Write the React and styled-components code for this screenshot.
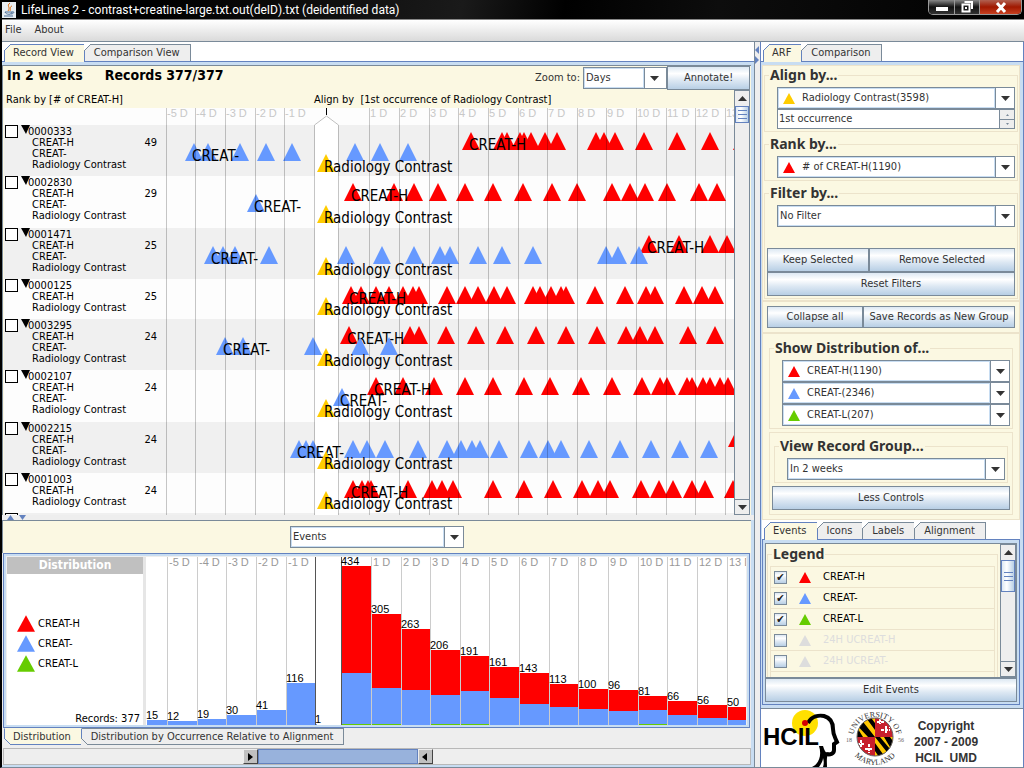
import { useState } from "react";
import styled, { createGlobalStyle, css } from "styled-components";

const colors = {
  cream: "#fbf8e2",
  creamEdge: "#ece3cb",
  steel: "#7a8a99",
  blueLine: "#6382bf",
  band: "#c8ddf2",
  panel: "#eeeeee",
  text: "#333333",
  red: "#ff0000",
  blue: "#6699ff",
  yellow: "#ffcc00",
  green: "#66cc00",
  muted: "#dddddd",
};

const uiFont = `"DejaVu Sans Condensed", "DejaVu Sans", sans-serif`;
const metal = `linear-gradient(#dde8f3, #ffffff 30%, #dde8f3 60%, #b8cfe5)`;

// pixel position of the left edge of the time axis and of the aligned event
const AXIS_LEFT = 166;
const ALIGN_X = 326;

const axisTicks = [
  [166, "-5 D"],
  [195, "-4 D"],
  [225, "-3 D"],
  [255, "-2 D"],
  [284, "-1 D"],
  [369, "1 D"],
  [399, "2 D"],
  [429, "3 D"],
  [458, "4 D"],
  [488, "5 D"],
  [518, "6 D"],
  [547, "7 D"],
  [577, "8 D"],
  [606, "9 D"],
  [636, "10 D"],
  [666, "11 D"],
  [695, "12 D"],
  [725, "13 D"],
];

const records = [
  {
    id: "0000333",
    count: 49,
    high: [471, 502, 507, 520, 524, 531, 545, 557, 596, 604, 615, 644, 677, 710, 742],
    normal: [194, 208, 240, 266, 292, 355, 380, 408],
  },
  {
    id: "0002830",
    count: 29,
    high: [353, 394, 414, 438, 465, 493, 523, 552, 577, 612, 630, 645, 667, 699, 717],
    normal: [256],
  },
  {
    id: "0001471",
    count: 25,
    high: [649, 679, 710, 727],
    normal: [213, 223, 235, 269, 346, 382, 414, 440, 450, 478, 502, 533, 606, 618, 639],
  },
  {
    id: "0000125",
    count: 25,
    high: [351, 361, 376, 389, 403, 413, 419, 447, 465, 478, 494, 507, 533, 540, 551, 561, 566, 595, 625, 646, 655, 684, 702, 715],
  },
  {
    id: "0003295",
    count: 24,
    high: [349, 410, 419, 446, 476, 505, 536, 566, 597, 626, 640, 655, 688, 715],
    normal: [225, 243, 313, 360, 389],
  },
  {
    id: "0002107",
    count: 24,
    high: [376, 403, 434, 465, 493, 524, 550, 581, 612, 642, 660, 667, 687, 692, 703, 710, 720, 728],
    normal: [342],
  },
  {
    id: "0002215",
    count: 24,
    high: [737],
    normal: [299, 306, 313, 353, 367, 385, 418, 447, 461, 472, 480, 499, 529, 548, 561, 589, 620, 651, 680, 709],
  },
  {
    id: "0001003",
    count: 24,
    high: [353, 362, 368, 371, 408, 432, 442, 453, 493, 524, 553, 582, 598, 610, 641, 659, 673, 692, 705, 733],
  },
];

// x, label, total height, height of the CREAT- part, height of the CREAT-L part
const bars = [
  [146, 15, 5, 5, 0],
  [167, 12, 4, 4, 0],
  [197, 19, 6, 6, 0],
  [226, 30, 10, 10, 0],
  [256, 41, 15, 15, 0],
  [286, 116, 42, 42, 0],
  [315, 1, 1, 1, 0],
  [341, 434, 159, 52, 1],
  [371, 305, 111, 37, 1],
  [401, 263, 96, 35, 0],
  [430, 206, 75, 30, 1],
  [460, 191, 69, 34, 1],
  [489, 161, 58, 27, 0],
  [519, 143, 52, 21, 0],
  [549, 113, 41, 18, 0],
  [578, 100, 36, 16, 0],
  [608, 96, 35, 14, 0],
  [638, 81, 29, 15, 1],
  [667, 66, 24, 10, 0],
  [697, 56, 20, 7, 0],
  [727, 50, 18, 5, 0],
  [757],
];
const distributionTicks = ["-5 D", "-4 D", "-3 D", "-2 D", "-1 D", "", "", "1 D", "2 D", "3 D", "4 D", "5 D", "6 D", "7 D", "8 D", "9 D", "10 D", "11 D", "12 D", "13 D"];

function Triangle({ color, size = 12 }) {
  return (
    <svg width={size} height={size - 1} viewBox='0 0 12 11' aria-hidden='true'>
      <path d='M6 0 L12 11 H0 Z' fill={color} />
    </svg>
  );
}

function Caret({ up = false, color = colors.text, width = 9 }) {
  return (
    <svg width={width} height='5' viewBox='0 0 9 5' preserveAspectRatio='none' aria-hidden='true'>
      <path d={up ? "M0 5 L4.5 0 L9 5 Z" : "M0 0 H9 L4.5 5 Z"} fill={color} />
    </svg>
  );
}

function Combo({ label, options, icon }) {
  return (
    <ComboBox>
      <ComboField $icon={icon}>
        {icon && <Triangle color={icon} />}
        <ComboSelect aria-label={label}>
          {options.map((option) => (
            <option key={option}>{option}</option>
          ))}
        </ComboSelect>
      </ComboField>
      <ComboArrow>
        <Caret />
      </ComboArrow>
    </ComboBox>
  );
}

function Tabs({ names, bottom = false }) {
  const [active, setActive] = useState(names[0]);

  return (
    <TabList role='tablist' $bottom={bottom}>
      {names.map((name) => (
        <Tab
          key={name}
          role='tab'
          aria-selected={name === active}
          $active={name === active}
          $bottom={bottom}
          onClick={() => setActive(name)}
        >
          {name}
        </Tab>
      ))}
    </TabList>
  );
}

function EventLane({ name, color, events, base }) {
  return (
    <g>
      {events.map((x, index) => (
        <path key={index} d={`M${x} ${base - 18} L${x + 9} ${base} H${x - 9} Z`} fill={color} />
      ))}
      {events[0] < 735 && (
        <EventLabel x={events[0] - 2} y={base}>
          {name}
        </EventLabel>
      )}
    </g>
  );
}

function Record({ record, shaded }) {
  const lanes = [{ name: "CREAT-H", color: colors.red, events: record.high }];
  if (record.normal) {
    lanes.push({ name: "CREAT-", color: colors.blue, events: record.normal });
  }
  lanes.push({ name: "Radiology Contrast", color: colors.yellow, events: [ALIGN_X] });

  return (
    <RecordRow $shaded={shaded} $tall={lanes.length > 2}>
      <RecordInfo>
        <RecordCheck type='checkbox' aria-label={`Select record ${record.id}`} />
        <RecordToggle aria-label={`Collapse record ${record.id}`}>
          <svg width='9' height='9' viewBox='0 0 9 9'>
            <path d='M0 0 H9 L5 9 Z' fill='#000' />
          </svg>
        </RecordToggle>
        <RecordText>
          {record.id}
          <LaneNames>
            {lanes.map(({ name }) => (
              <li key={name}>{name}</li>
            ))}
          </LaneNames>
        </RecordText>
        <RecordCount>{record.count}</RecordCount>
      </RecordInfo>
      <Timeline>
        <g transform={`translate(${-AXIS_LEFT} 0)`}>
          <rect x='315' y='0' width='23' height='60' fill='#fff' />
          {lanes.map((lane, index) => (
            <EventLane key={lane.name} {...lane} base={25 + index * 11} />
          ))}
          <GridLines />
        </g>
      </Timeline>
    </RecordRow>
  );
}

function GridLines() {
  return [...axisTicks.map(([x]) => x), 314, 338].map((x) => (
    <rect key={x} x={x} y='0' width='1' height='60' fill='rgba(0, 0, 0, 0.22)' />
  ));
}

function Axis() {
  return (
    <AxisRow>
      <Timeline>
        <g transform={`translate(${-AXIS_LEFT} 0)`}>
          {axisTicks.map(([x, name]) => (
            <g key={name}>
              <rect x={x} y='0' width='1' height='17' fill='#c8c8c8' />
              <TickLabel x={x + 1} y='9' fill='#c8c8c8'>
                {name}
              </TickLabel>
            </g>
          ))}
          <path d='M314.5 17 L326.5 8 L338.5 17' fill='#fff' stroke='#c0c0c0' />
          <rect x={ALIGN_X} y='0' width='1' height='7' fill='#000' />
        </g>
      </Timeline>
    </AxisRow>
  );
}

function DistributionChart() {
  return (
    <ChartArea>
      <g transform='translate(-146 0)'>
        {bars.slice(1, -1).map(([x], index) => (
          <g key={x}>
            <rect
              x={x}
              y='0'
              width='1'
              height='168'
              fill={x === 315 || x === 341 ? "#555" : "#ccc"}
            />
            <TickLabel x={x + 2} y='9' fill='#999'>
              {distributionTicks[index]}
            </TickLabel>
          </g>
        ))}
        {bars.slice(0, -1).map(([x, value, total, normal, low], index) => {
          const width = value === 1 ? 1 : bars[index + 1][0] - x - 1;
          return (
            <g key={x}>
              <rect x={x + 1} y={168 - total} width={width} height={total} fill={colors.red} />
              <rect x={x + 1} y={168 - normal} width={width} height={normal} fill={colors.blue} />
              <rect x={x + 1} y={168 - low} width={width} height={low} fill={colors.green} />
              <TickLabel x={x} y={167 - total} fill='#000'>
                {value}
              </TickLabel>
            </g>
          );
        })}
      </g>
    </ChartArea>
  );
}

function ScrollBar({ thumb }) {
  return (
    <ScrollTrack>
      <ScrollButton aria-label='Scroll up'>
        <Caret up />
      </ScrollButton>
      <ScrollThumb $size={thumb} />
      <ScrollButton aria-label='Scroll down' $end>
        <Caret />
      </ScrollButton>
    </ScrollTrack>
  );
}

function RecordView() {
  return (
    <LeftColumn>
      <Tabs names={["Record View", "Comparison View"]} />
      <RecordPane>
        <PaneHeader>
          <PaneTitle>In 2 weeks</PaneTitle>
          <PaneTitle>Records 377/377</PaneTitle>
          <ZoomControls>
            <span>Zoom to:</span>
            <ZoomCombo>
              <Combo label='Zoom to' options={["Days", "Weeks", "Months"]} />
            </ZoomCombo>
            <AnnotateButton>Annotate!</AnnotateButton>
          </ZoomControls>
        </PaneHeader>
        <RecordScroll>
          <RecordList>
            <OrderRow>
              <span>Rank by [# of CREAT-H]</span>
              <span>Align by &nbsp;[1st occurrence of Radiology Contrast]</span>
            </OrderRow>
            <Axis />
            {records.map((record, index) => (
              <Record key={record.id} record={record} shaded={index % 2 === 0} />
            ))}
            <RecordRow $shaded $tall>
              <RecordInfo>
                <RecordCheck type='checkbox' aria-label='Select next record' />
              </RecordInfo>
              <Timeline>
                <g transform={`translate(${-AXIS_LEFT} 0)`}>
                  <rect x='315' y='0' width='23' height='60' fill='#fff' />
                  <GridLines />
                </g>
              </Timeline>
            </RecordRow>
          </RecordList>
          <ScrollBar thumb={17} />
        </RecordScroll>
      </RecordPane>
      <HorizontalSplitter>
        <Caret up color={colors.blueLine} width={7} />
        <Caret color={colors.blueLine} width={7} />
      </HorizontalSplitter>
      <DistributionPane>
        <DistributionHeader>
          <DistributionCombo>
            <Combo label='Distribution of' options={["Events", "Records"]} />
          </DistributionCombo>
        </DistributionHeader>
        <DistributionBody>
          <DistributionLegend>
            <LegendTitle>Distribution</LegendTitle>
            <LegendList>
              <li>
                <Triangle size={18} color={colors.red} />
                CREAT-H
              </li>
              <li>
                <Triangle size={18} color={colors.blue} />
                CREAT-
              </li>
              <li>
                <Triangle size={18} color={colors.green} />
                CREAT-L
              </li>
            </LegendList>
            <LegendTotal>Records: 377</LegendTotal>
          </DistributionLegend>
          <DistributionChart />
        </DistributionBody>
        <Tabs bottom names={["Distribution", "Distribution by Occurrence Relative to Alignment"]} />
        <RangeTrack>
          <RangeHandle aria-label='Range start'>
            <svg width='6' height='8'>
              <path d='M0 0 L5 4 L0 8 Z' />
            </svg>
          </RangeHandle>
          <RangeFill />
          <RangeHandle aria-label='Range end'>
            <svg width='6' height='8'>
              <path d='M5 0 L0 4 L5 8 Z' />
            </svg>
          </RangeHandle>
        </RangeTrack>
      </DistributionPane>
    </LeftColumn>
  );
}

function ControlPanel() {
  return (
    <RightColumn>
      <Tabs names={["ARF", "Comparison"]} />
      <ControlBody>
        <ControlGroup>
          <Fieldset>
            <legend>Align by...</legend>
            <Indent>
              <Combo label='Align by' icon={colors.yellow} options={["Radiology Contrast(3598)"]} />
              <Spinner>
                <SpinnerInput aria-label='Occurrence' defaultValue='1st occurrence' />
                <SpinnerButtons>
                  <button aria-label='Next'>
                    <Caret up color={colors.steel} width={3} />
                  </button>
                  <button aria-label='Previous'>
                    <Caret color={colors.steel} width={3} />
                  </button>
                </SpinnerButtons>
              </Spinner>
            </Indent>
          </Fieldset>
          <Fieldset>
            <legend>Rank by...</legend>
            <Indent>
              <Combo label='Rank by' icon={colors.red} options={["# of CREAT-H(1190)"]} />
            </Indent>
          </Fieldset>
          <Fieldset>
            <legend>Filter by...</legend>
            <Indent>
              <Combo label='Filter by' options={["No Filter"]} />
            </Indent>
            <FilterButtons>
              <MetalButton>Keep Selected</MetalButton>
              <MetalButton>Remove Selected</MetalButton>
              <WideButton>Reset Filters</WideButton>
            </FilterButtons>
          </Fieldset>
        </ControlGroup>
        <ActionGroup>
          <ShortButton>Collapse all</ShortButton>
          <ShortButton>Save Records as New Group</ShortButton>
        </ActionGroup>
        <LowerGroup>
          <Fieldset>
            <legend>Show Distribution of...</legend>
            <Indent>
              <Combo label='First distribution' icon={colors.red} options={["CREAT-H(1190)"]} />
              <Combo label='Second distribution' icon={colors.blue} options={["CREAT-(2346)"]} />
              <Combo label='Third distribution' icon={colors.green} options={["CREAT-L(207)"]} />
            </Indent>
          </Fieldset>
          <RecordGroup>
            <Fieldset>
              <legend>View Record Group...</legend>
              <Indent>
                <Combo label='Record group' options={["In 2 weeks"]} />
              </Indent>
            </Fieldset>
            <MetalButton>Less Controls</MetalButton>
          </RecordGroup>
        </LowerGroup>
        <Tabs names={["Events", "Icons", "Labels", "Alignment"]} />
        <EventsBody>
          <EventsScroll>
            <EventsList>
              <Fieldset>
                <legend>Legend</legend>
                {[
                  ["CREAT-H", colors.red],
                  ["CREAT-", colors.blue],
                  ["CREAT-L", colors.green],
                  ["24H UCREAT-H"],
                  ["24H UCREAT-"],
                  [""],
                ].map(([name, color], index) => (
                  <EventRow key={index} $off={!color}>
                    {name && <EventCheck type='checkbox' defaultChecked={Boolean(color)} />}
                    {name && <Triangle size={12} color={color || colors.muted} />}
                    {name}
                  </EventRow>
                ))}
              </Fieldset>
            </EventsList>
            <ScrollBar thumb={32} />
          </EventsScroll>
          <MetalButton>Edit Events</MetalButton>
        </EventsBody>
      </ControlBody>
      <Footer>
        <HcilLogo />
        <UniversitySeal />
        <Copyright>
          Copyright
          <br />
          2007 - 2009
          <br />
          HCIL &nbsp;UMD
        </Copyright>
      </Footer>
    </RightColumn>
  );
}

function HcilLogo() {
  return (
    <svg width='78' height='58' viewBox='0 0 78 58' role='img' aria-label='HCIL'>
      <circle cx='42' cy='14' r='13' fill='#ffe000' />
      <path
        d='M45 14 C49 7 56 6 61 7 C68 9 70 14 70 20 C70 26 72 28 74 33 L71 35 V41 C71 45 67 46 63 45'
        fill='none'
        stroke='#000'
        strokeWidth='4'
      />
      <path d='M56 37 H60 C62 43 63 45 66 43 C63 48 64 53 64 58 H49 C56 55 59 46 56 37 Z' fill='#000' />
      <path d='M60 49 C60 52 58 55 56 58 H60 C61 55 61 52 60 49 Z' fill='#fff' />
      <LogoText x='0' y='36'>
        HCIL
      </LogoText>
      <circle cx='42' cy='14' r='3' fill='#d40000' />
    </svg>
  );
}

function UniversitySeal() {
  return (
    <svg width='60' height='58' viewBox='0 0 60 58' role='img' aria-label='University of Maryland'>
      <defs>
        <clipPath id='globe'>
          <ellipse cx='30' cy='28' rx='18' ry='19' />
        </clipPath>
        <path id='sealTop' d='M8 30 A22 22 0 0 1 52 30' />
        <path id='sealBottom' d='M4 32 A26 24 0 0 0 56 32' />
      </defs>
      <g clipPath='url(#globe)'>
        <rect width='60' height='58' fill='#c8202c' />
        <path d='M6 4 H30 V28 H6 Z M30 28 H54 V52 H30 Z' fill='#ffc800' />
        <path
          d='M10 14 L15 9 L30 28 H23 Z M19 6 H24 L30 14 V21 Z M9 21 L13 20 L18 28 H10 Z M30 28 H35 L45 40 V47 Z M39 28 H45 L52 38 L48 43 Z M30 34 L40 48 H34 L30 42 Z'
          fill='#000'
        />
        <path
          d='M35 10 V15 M32 13 H40 M41 17 V24 M36 21 H45 M45 14 V19 M16 31 V39 M12 35 H20 M24 35 V44 M20 40 H28'
          stroke='#fff'
          strokeWidth='2'
          strokeDasharray='3 1'
        />
      </g>
      <ellipse cx='30' cy='28' rx='18' ry='19' fill='none' stroke='#666' />
      <SealText>
        <textPath href='#sealTop' startOffset='50%' textAnchor='middle'>
          UNIVERSITY OF
        </textPath>
      </SealText>
      <SealText>
        <textPath href='#sealBottom' startOffset='50%' textAnchor='middle'>
          MARYLAND
        </textPath>
      </SealText>
      <SealYear x='1' y='33'>
        18
      </SealYear>
      <SealYear x='53' y='33'>
        56
      </SealYear>
    </svg>
  );
}

export default function App() {
  return (
    <Frame>
      <GlobalStyle />
      <TitleBar>
        <svg width='14' height='16' viewBox='0 0 14 16' aria-hidden='true'>
          <rect width='14' height='16' fill='#e8eef2' />
          <path d='M8 1 C4 4 9 5 6 9 M10 4 C7 5 9 7 8 9' fill='none' stroke='#e07010' />
          <path d='M3 10 H10 C10 13 4 13 3 10 M10 10 C13 9 12 12 9 12 M2 14 H11' fill='none' stroke='#4a6d96' />
        </svg>
        <h1>LifeLines 2 - contrast+creatine-large.txt.out(deID).txt (deidentified data)</h1>
        <WindowButtons>
          <WindowButton aria-label='Minimize'>
            <svg width='12' height='8'>
              <rect x='0' y='4' width='12' height='4' fill='#fff' />
            </svg>
          </WindowButton>
          <WindowButton aria-label='Restore'>
            <svg width='12' height='12'>
              <path d='M3.5 1 H11 V8 M1.5 3.5 H8.5 V10.5 H1.5 Z' fill='none' stroke='#fff' strokeWidth='2' />
              <rect x='4' y='6' width='2' height='2' fill='#fff' />
            </svg>
          </WindowButton>
          <WindowButton aria-label='Close' $close>
            <svg width='12' height='11'>
              <path d='M2 1 L10 10 M10 1 L2 10' stroke='#fff' strokeWidth='3' />
            </svg>
          </WindowButton>
        </WindowButtons>
      </TitleBar>
      <MenuBar>
        <a href='#file'>File</a>
        <a href='#about'>About</a>
      </MenuBar>
      <Workspace>
        <RecordView />
        <VerticalSplitter>
          <svg width='4' height='18'>
            <path d='M4 0 V8 L0 4 Z M0 10 V18 L4 14 Z' fill={colors.blueLine} />
          </svg>
        </VerticalSplitter>
        <ControlPanel />
      </Workspace>
    </Frame>
  );
}

const GlobalStyle = createGlobalStyle`
  * {
    box-sizing: border-box;
  }

  body {
    margin: 0;
    background-color: ${colors.panel};
  }

  button,
  select,
  input {
    font: inherit;
    color: inherit;
    margin: 0;
    padding: 0;
    border: 0;
    border-radius: 0;
    background: none;
  }

  svg {
    display: block;
    flex: none;
  }

  ul {
    list-style-type: none;
    margin: 0;
    padding: 0;
  }
`;

const Frame = styled.div`
  height: 100vh;
  min-height: 768px;
  display: flex;
  flex-direction: column;
  border-left: 2px solid #000;
  border-bottom: 1px solid ${colors.steel};
  background-color: ${colors.panel};
  font-family: ${uiFont};
  font-size: 11px;
  line-height: 14px;
  color: ${colors.text};
  overflow: hidden;
`;

const TitleBar = styled.header`
  flex: none;
  display: flex;
  height: 20px;
  gap: 5px;
  align-items: center;
  background: linear-gradient(100deg, #000 15%, #1a1a1a 45%, #000 55%, #0d0d0d 70%, #000);
  border-bottom: 1px solid #888;

  h1 {
    margin: 0;
    flex: 1;
    color: #fff;
    font: 12px Roboto, "Noto Sans", sans-serif;
  }
`;

const WindowButtons = styled.div`
  align-self: flex-start;
  display: flex;
  margin-right: 2px;
  border: 1px solid #999;
  border-top: 0;
  border-radius: 0 0 5px 5px;
  overflow: hidden;
`;

const WindowButton = styled.button`
  display: flex;
  align-items: center;
  justify-content: center;
  width: ${({ $close }) => ($close ? 42 : 25)}px;
  height: 14px;
  background: ${({ $close }) =>
    $close ? "linear-gradient(#b06050, #a01800 50%, #c84020)" : "linear-gradient(#888, #111 50%, #333)"};

  & + & {
    border-left: 1px solid #999;
  }
`;

const MenuBar = styled.nav`
  flex: none;
  display: flex;
  height: 22px;
  gap: 13px;
  padding: 3px 3px 0;
  background: linear-gradient(#ffffff, #dadada);
  border-bottom: 1px solid ${colors.steel};

  a {
    color: ${colors.text};
    text-decoration: none;
  }
`;

const Workspace = styled.main`
  flex: 1;
  min-height: 0;
  display: grid;
  grid-template-columns: minmax(0, 1fr) 5px 264px;
`;

const LeftColumn = styled.section`
  display: flex;
  flex-direction: column;
  min-height: 0;
  min-width: 0;
  border-right: 1px solid ${colors.steel};
  background-color: #fff;
`;

const RightColumn = styled.aside`
  display: flex;
  flex-direction: column;
  min-height: 0;
  background-color: #fff;
  border: solid ${colors.blueLine};
  border-width: 0 1px;
`;

const VerticalSplitter = styled.div`
  background-color: ${colors.panel};
  padding-top: 4px;
`;

const TabList = styled.div`
  flex: none;
  display: flex;
  padding-left: 2px;
  padding-top: ${({ $bottom }) => ($bottom ? 0 : 2)}px;
  background-color: ${({ $bottom }) => ($bottom ? colors.panel : "#fff")};
  ${({ $bottom }) => !$bottom && `border-bottom: 1px solid ${colors.blueLine};`}
`;

const Tab = styled.button`
  position: relative;
  height: 17px;
  padding: 0 10px 0 8px;
  white-space: nowrap;
  border: 1px solid ${({ $active }) => ($active ? colors.blueLine : colors.steel)};
  background-color: ${({ $active }) => ($active ? colors.cream : colors.panel)};

  ${({ $bottom, $active }) =>
    $bottom
      ? css`
          border-top-color: ${$active ? colors.cream : colors.steel};
        `
      : css`
          border-bottom: 0;
          ${$active && "margin-bottom: -1px; padding-bottom: 1px; height: 18px;"}
        `}

  & + & {
    border-left-width: 0;
    padding-left: 9px;
  }

  &::before {
    content: "";
    position: absolute;
    left: -1px;
    width: 7px;
    height: 7px;
    ${({ $bottom, $active }) => {
      const line = $active ? colors.blueLine : colors.steel;
      const fill = $active ? colors.cream : colors.panel;
      const outside = $bottom ? colors.panel : "#fff";
      return css`
        ${$bottom ? "bottom" : "top"}: -1px;
        background: linear-gradient(
          ${$bottom ? 45 : 135}deg,
          ${outside} 44%,
          ${line} 44%,
          ${line} 54%,
          ${fill} 54%
        );
      `;
    }}
  }
`;

const RecordPane = styled.div`
  flex: 1;
  min-height: 0;
  display: flex;
  flex-direction: column;
  background-color: ${colors.cream};
  border: solid ${colors.band};
  border-width: 3px 3px 0 0;
  box-shadow: inset 1px 1px 0 ${colors.steel};
  padding: 1px 1px 0 2px;
`;

const PaneHeader = styled.div`
  flex: none;
  display: flex;
  gap: 22px;
  padding-left: 3px;
`;

const PaneTitle = styled.h2`
  margin: 0;
  color: #000;
  font-size: 14px;
  line-height: 18px;
`;

const ZoomControls = styled.div`
  margin-left: auto;
  display: flex;
  align-items: center;

  span {
    margin-right: 3px;
  }
`;

const ZoomCombo = styled.div`
  width: 84px;
`;

const buttonLook = css`
  border: 1px solid ${colors.steel};
  background: ${metal};
  white-space: nowrap;
`;

const MetalButton = styled.button`
  ${buttonLook}
  height: 24px;
`;

const ShortButton = styled(MetalButton)`
  height: 22px;
`;

const WideButton = styled(MetalButton)`
  grid-column: 1 / -1;
`;

const AnnotateButton = styled(MetalButton)`
  width: 83px;
`;

const RecordScroll = styled.div`
  flex: 1;
  min-height: 0;
  display: flex;
`;

const RecordList = styled.div`
  flex: 1;
  min-width: 0;
  overflow: hidden;
  color: #000;
`;

const OrderRow = styled.div`
  display: grid;
  grid-template-columns: 308px 1fr;
  height: 18px;
  padding: 3px 0 0 2px;
  white-space: nowrap;
`;

const AxisRow = styled.div`
  height: 17px;
  padding-left: 162px;
  background-color: #fdfdfd;
`;

const Timeline = styled.svg`
  width: 100%;
  height: 100%;
  overflow: hidden;
`;

const TickLabel = styled.text`
  font: 11px "Liberation Sans", Arial, sans-serif;
`;

const EventLabel = styled.text`
  font-size: 15px;
  fill: #000;
`;

const RecordRow = styled.div`
  display: grid;
  grid-template-columns: 162px minmax(0, 1fr);
  height: ${({ $tall, $shaded }) => ($tall ? ($shaded ? 51 : 52) : 40)}px;
  background-color: ${({ $shaded }) => ($shaded ? "#f0f0f0" : "#fdfdfd")};
`;

const RecordInfo = styled.div`
  display: flex;
  align-items: flex-start;
  line-height: 11px;
`;

const RecordCheck = styled.input`
  appearance: none;
  width: 13px;
  height: 13px;
  margin: 0 3px 0 1px;
  border: 1px solid #000;
  background-color: #fff;
`;

const RecordToggle = styled.button`
  width: 7px;
  height: 9px;
`;

const RecordText = styled.div`
  flex: 1;
  padding-top: 1px;
  white-space: nowrap;
`;

const LaneNames = styled.ul`
  padding-left: 4px;
`;

const RecordCount = styled.span`
  padding: 12px 9px 0 0;
`;

const HorizontalSplitter = styled.div`
  flex: none;
  height: 5px;
  display: flex;
  gap: 5px;
  padding-left: 5px;
  background-color: ${colors.panel};
`;

const DistributionPane = styled.div`
  flex: none;
  display: flex;
  flex-direction: column;
  background-color: ${colors.panel};
  border: solid ${colors.band};
  border-width: 0 3px 2px 0;
`;

const DistributionHeader = styled.div`
  display: flex;
  justify-content: center;
  padding: 5px 0;
  border: 1px solid ${colors.steel};
  border-width: 1px 0 0 1px;
  background-color: ${colors.cream};
`;

const DistributionCombo = styled.div`
  width: 174px;
`;

const DistributionBody = styled.div`
  display: flex;
  border: 1px solid ${colors.blueLine};
  box-shadow: inset 0 0 0 2px ${colors.band};
  padding: 3px 3px 2px;
  margin: 0 1px;
`;

const DistributionLegend = styled.div`
  flex: none;
  width: 139px;
  display: flex;
  flex-direction: column;
  justify-content: space-between;
  background-color: #fff;
  border-right: 3px solid #e6e6e6;
  color: #000;
`;

const LegendTitle = styled.h3`
  margin: 0;
  background-color: #c0c0c0;
  color: #fff;
  text-align: center;
  font-size: 12px;
  line-height: 17px;
`;

const LegendList = styled.ul`
  display: flex;
  flex-direction: column;
  gap: 3px;
  padding-left: 10px;

  li {
    display: flex;
    align-items: center;
    gap: 3px;
  }
`;

const LegendTotal = styled.div`
  padding-right: 3px;
  text-align: right;
  line-height: 12px;
`;

const ChartArea = styled.svg`
  flex: 1 1 0;
  min-width: 0;
  height: 168px;
  background-color: #fff;
  overflow: hidden;
`;

const RangeTrack = styled.div`
  display: grid;
  grid-template-columns: 239fr 15px 159fr 15px 317fr;
  height: 17px;
  margin: 3px 0 0 1px;
  border: 1px solid #b8b8b8;

  > :first-child {
    grid-column: 2;
  }
`;

const RangeHandle = styled.button`
  display: flex;
  align-items: center;
  justify-content: center;
  background-color: #c0c0c0;
  border: 1px solid;
  border-color: #eee #444 #444 #eee;
`;

const RangeFill = styled.div`
  background-color: #98b2dc;
  border: 1px solid ${colors.blueLine};
`;

const ComboBox = styled.div`
  display: flex;
  height: 22px;
  border: 1px solid ${colors.steel};
  background-color: #fff;
`;

const ComboField = styled.label`
  flex: 1;
  min-width: 0;
  display: flex;
  align-items: center;
  gap: ${({ $icon }) => ($icon ? 7 : 0)}px;
  padding-left: ${({ $icon }) => ($icon ? 4 : 1)}px;
  border: 1px solid ${colors.band};
`;

const ComboSelect = styled.select`
  appearance: none;
  flex: 1;
  min-width: 0;
  outline: none;
`;

const ComboArrow = styled.span`
  width: 19px;
  display: flex;
  align-items: center;
  justify-content: center;
  border-left: 1px solid ${colors.steel};
`;

const Spinner = styled.div`
  display: flex;
  height: 20px;
  border: 1px solid ${colors.steel};
  background-color: #fff;
`;

const SpinnerInput = styled.input`
  flex: 1;
  min-width: 0;
  padding-left: 1px;
`;

const SpinnerButtons = styled.div`
  width: 15px;
  display: grid;
  grid-template-rows: 1fr 1fr;
  border-left: 1px solid ${colors.steel};

  button {
    display: grid;
    place-items: center;
    background-color: ${colors.panel};
  }

  button + button {
    border-top: 1px solid ${colors.steel};
  }

  svg {
    height: 2px;
  }
`;

const ScrollTrack = styled.div`
  flex: none;
  width: 16px;
  display: flex;
  flex-direction: column;
  border: 1px solid ${colors.steel};
  background-color: ${colors.panel};
`;

const ScrollButton = styled.button`
  display: flex;
  align-items: center;
  justify-content: center;
  flex: none;
  height: 15px;
  ${({ $end }) => $end && `margin-top: auto; border-top: 1px solid ${colors.steel};`}
`;

const ScrollThumb = styled.div`
  height: ${({ $size }) => $size}px;
  display: flex;
  align-items: center;
  justify-content: center;
  border: 1px solid ${colors.blueLine};
  background: linear-gradient(90deg, #dde8f3, #fff 40%, #b8cfe5);

  &::before {
    content: "";
    width: 9px;
    height: 7px;
    border: solid ${colors.blueLine};
    border-width: 1px 0;
    background: linear-gradient(${colors.blueLine}, ${colors.blueLine}) center / 100% 1px no-repeat;
  }
`;

const ControlBody = styled.div`
  flex: 1;
  min-height: 0;
  display: flex;
  flex-direction: column;
  background-color: ${colors.cream};
  border: solid ${colors.band};
  border-width: 3px 3px 3px 1px;
`;

const ControlGroup = styled.div`
  flex: none;
  display: flex;
  flex-direction: column;
  gap: 4px;
  border: 1px solid ${colors.creamEdge};
  padding: 1px;
`;

const Fieldset = styled.fieldset`
  min-width: 0;
  margin: 0;
  border: 1px solid ${colors.creamEdge};
  padding: 4px 2px 2px;

  legend {
    margin-left: 2px;
    padding: 0 1px;
    font: bold 14px/16px "Noto Sans", "Open Sans", sans-serif;
  }
`;

const Indent = styled.div`
  padding-left: 10px;
`;

const FilterButtons = styled.div`
  display: grid;
  grid-template-columns: 102px 1fr;
  margin-top: 21px;
`;

const ActionGroup = styled.div`
  flex: none;
  display: grid;
  grid-template-columns: 96px 1fr;
  border: 1px solid ${colors.creamEdge};
  padding: 4px;
`;

const LowerGroup = styled.div`
  flex: none;
  display: flex;
  flex-direction: column;
  gap: 3px;
  border: 1px solid ${colors.creamEdge};
  padding: 6px 6px 4px;
`;

const RecordGroup = styled.div`
  display: flex;
  flex-direction: column;
  gap: 3px;
  border: 1px solid ${colors.creamEdge};
  padding: 5px 2px 4px;

  fieldset {
    margin: 0 2px;
  }
`;

const EventsBody = styled.div`
  flex: 1;
  min-height: 0;
  display: flex;
  flex-direction: column;
  border: 1px solid ${colors.blueLine};
  border-top: 0;
  background-color: ${colors.band};
  padding: 3px 2px 2px;
`;

const EventsScroll = styled.div`
  flex: 1;
  min-height: 0;
  display: flex;
  border: 1px solid ${colors.steel};
  background-color: ${colors.cream};
`;

const EventsList = styled.div`
  flex: 1;
  min-width: 0;
  padding: 2px 2px 0 1px;
  overflow: hidden;
`;

const EventRow = styled.label`
  display: flex;
  align-items: center;
  gap: 12px;
  height: 21px;
  padding-left: 3px;
  border: solid ${colors.creamEdge};
  border-width: 1px 1px 0;
  color: ${({ $off }) => ($off ? colors.muted : "#000")};
`;

const EventCheck = styled.input`
  appearance: none;
  display: grid;
  place-items: center;
  width: 13px;
  height: 13px;
  border: 1px solid ${colors.steel};
  background: ${metal};

  &:checked::before {
    content: "✔";
    color: #222;
    font-size: 11px;
    line-height: 11px;
  }
`;

const Footer = styled.footer`
  flex: none;
  display: flex;
  align-items: center;
  gap: 4px;
  height: 59px;
  padding-left: 2px;
  border-top: 1px solid ${colors.steel};
`;

const Copyright = styled.p`
  margin: 8px 0 0 5px;
  text-align: center;
  font: bold 12px/16px "Liberation Sans", Arial, sans-serif;
`;

const LogoText = styled.text`
  font: bold 24px "Liberation Sans", Arial, sans-serif;
  fill: #000;
`;

const SealText = styled.text`
  font: 8px "Liberation Serif", serif;
  fill: #333;
`;

const SealYear = styled.text`
  font: 6px "Liberation Serif", serif;
  fill: #666;
`;
